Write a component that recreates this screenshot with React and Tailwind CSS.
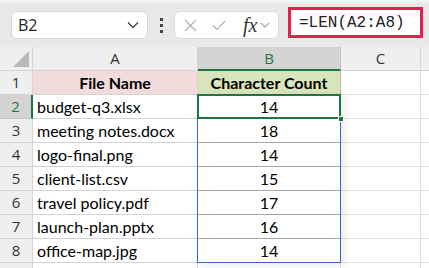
const rows = [
  ["budget-q3.xlsx", 14],
  ["meeting notes.docx", 18],
  ["logo-final.png", 14],
  ["client-list.csv", 15],
  ["travel policy.pdf", 17],
  ["launch-plan.pptx", 16],
  ["office-map.jpg", 14],
];

const cellFont = { fontFamily: "Lato, 'Open Sans', sans-serif" };
const uiFont = { fontFamily: "'Open Sans', 'Liberation Sans', sans-serif" };

function Chevron({ className }) {
  return (
    <svg className={className} width="12" height="8" viewBox="0 0 12 8" fill="none">
      <path d="M1 1.5 L6 6.5 L11 1.5" stroke="currentColor" strokeWidth="1.3" />
    </svg>
  );
}

function Toolbar() {
  return (
    <div className="h-[47px] bg-[#e9e9e9] flex items-start border-t-[3px] border-[#f2f2f2]">
      {/* name box */}
      <div
        className="ml-[11px] mt-[8px] w-[137px] h-[28px] rounded-[6px] bg-white border border-[#d6d6d6] flex items-center justify-between pl-[6px] pr-[8px]"
        style={uiFont}
      >
        <span className="text-[16px] text-[#222]">B2</span>
        <Chevron className="text-[#444]" />
      </div>
      {/* dots */}
      <div className="ml-[12px] mt-[15px] flex flex-col gap-[3px]">
        <div className="w-[3px] h-[3px] bg-[#3d4a3d]" />
        <div className="w-[3px] h-[3px] bg-[#3d4a3d]" />
        <div className="w-[3px] h-[3px] bg-[#3d4a3d]" />
      </div>
      {/* fx box */}
      <div className="ml-[11px] mt-[8px] w-[105px] h-[28px] rounded-[6px] bg-white border border-[#dcdcdc] flex items-center pl-[9px]">
        <svg width="13" height="13" viewBox="0 0 13 13">
          <path d="M1 1 L12 12 M12 1 L1 12" stroke="#b4b4b4" strokeWidth="1.2" />
        </svg>
        <svg className="ml-[15px]" width="14" height="11" viewBox="0 0 14 11">
          <path d="M1 5.5 L5 9.5 L13 1" stroke="#b4b4b4" strokeWidth="1.2" fill="none" />
        </svg>
        <span
          className="ml-[17px] text-[20px] italic text-[#333] leading-none"
          style={{ fontFamily: "'Liberation Serif', serif" }}
        >
          fx
        </span>
        <Chevron className="ml-[3px] text-[#9a9a9a] w-[10px]" />
      </div>
      {/* formula */}
      <div className="ml-[9px] mt-[4px] w-[135px] h-[31px] bg-white border-[3px] border-[#e2214d] flex items-center pl-[8px]">
        <span className="text-[16px] text-[#222]" style={{ fontFamily: "'Liberation Mono', monospace" }}>
          =LEN(A2:A8)
        </span>
      </div>
    </div>
  );
}

function Grid() {
  return (
    <div className="relative grid grid-cols-[33px_165px_143px_80px_1fr] auto-rows-[24px]" style={cellFont}>
      {/* column headers */}
      <div className="bg-[#efefef] border-r border-b border-[#d4d4d4] relative">
        <svg className="absolute right-[3px] bottom-[3px]" width="16" height="16" viewBox="0 0 16 16">
          <path d="M16 0 L16 16 L0 16 Z" fill="#b9b9b9" />
        </svg>
      </div>
      <div className="bg-[#efefef] border-r border-b border-[#d4d4d4] flex items-center justify-center text-[15px] text-[#333]" style={uiFont}>
        A
      </div>
      <div className="bg-[#d3d3d3] border-r border-[#c4c4c4] border-b-2 border-b-[#217346] flex items-center justify-center text-[15px] text-[#217346]" style={uiFont}>
        B
      </div>
      <div className="bg-[#efefef] border-r border-b border-[#d4d4d4] flex items-center justify-center text-[15px] text-[#333]" style={uiFont}>
        C
      </div>
      <div className="bg-[#efefef] border-b border-[#d4d4d4]" />

      {/* row 1 */}
      <div className="bg-[#efefef] border-r border-b border-[#d4d4d4] flex items-center justify-center text-[15px] text-[#333]" style={uiFont}>
        1
      </div>
      <div className="bg-[#f2dcdb] border-r border-b border-[#d4d4d4] flex items-center justify-center text-[16px] font-bold text-black">
        File Name
      </div>
      <div className="bg-[#d8e4bc] border-r border-b border-[#b8b8b8] flex items-center justify-center text-[16px] font-bold text-black">
        Character Count
      </div>
      <div className="border-r border-b border-[#e1e1e1]" />
      <div className="border-b border-[#e1e1e1]" />

      {rows.map(([name, count], i) => {
        const sel = i === 0;
        return [
          <div
            key={"n" + i}
            className={
              sel
                ? "bg-[#d3d3d3] border-r-2 border-r-[#217346] border-b border-b-[#c4c4c4] flex items-center justify-center text-[15px] text-[#217346]"
                : "bg-[#efefef] border-r border-b border-[#d4d4d4] flex items-center justify-center text-[15px] text-[#333]"
            }
            style={uiFont}
          >
            {i + 2}
          </div>,
          <div key={"a" + i} className="border-r border-b border-[#d4d4d4] flex items-center pl-[4px] text-[16px] text-black">
            {name}
          </div>,
          <div key={"b" + i} className="border-r border-b border-[#a6a6a6] flex items-center justify-center text-[16px] text-black">
            {count}
          </div>,
          <div key={"c" + i} className="border-r border-b border-[#e1e1e1]" />,
          <div key={"d" + i} className="border-b border-[#e1e1e1]" />,
        ];
      })}

      {/* row 9 stub */}
      <div className="bg-[#efefef] border-r border-[#d4d4d4]" />
      <div className="border-r border-[#d4d4d4]" />
      <div className="border-r border-[#e1e1e1]" />
      <div className="border-r border-[#e1e1e1]" />
      <div />

      {/* blue range B2:B8 */}
      <div className="absolute left-[197px] top-[47px] w-[144px] h-[169px] border border-[#3a67c4] shadow-[4px_2px_8px_rgba(0,0,0,0.08)] pointer-events-none" />
      {/* active cell B2 */}
      <div className="absolute left-[197px] top-[47px] w-[144px] h-[25px] border-2 border-[#217346] pointer-events-none" />
      <div className="absolute left-[338px] top-[69px] w-[6px] h-[6px] bg-[#217346] border border-white pointer-events-none" />
    </div>
  );
}

export default function App() {
  return (
    <div className="w-[429px] h-[268px] overflow-hidden bg-white">
      <Toolbar />
      <Grid />
    </div>
  );
}
